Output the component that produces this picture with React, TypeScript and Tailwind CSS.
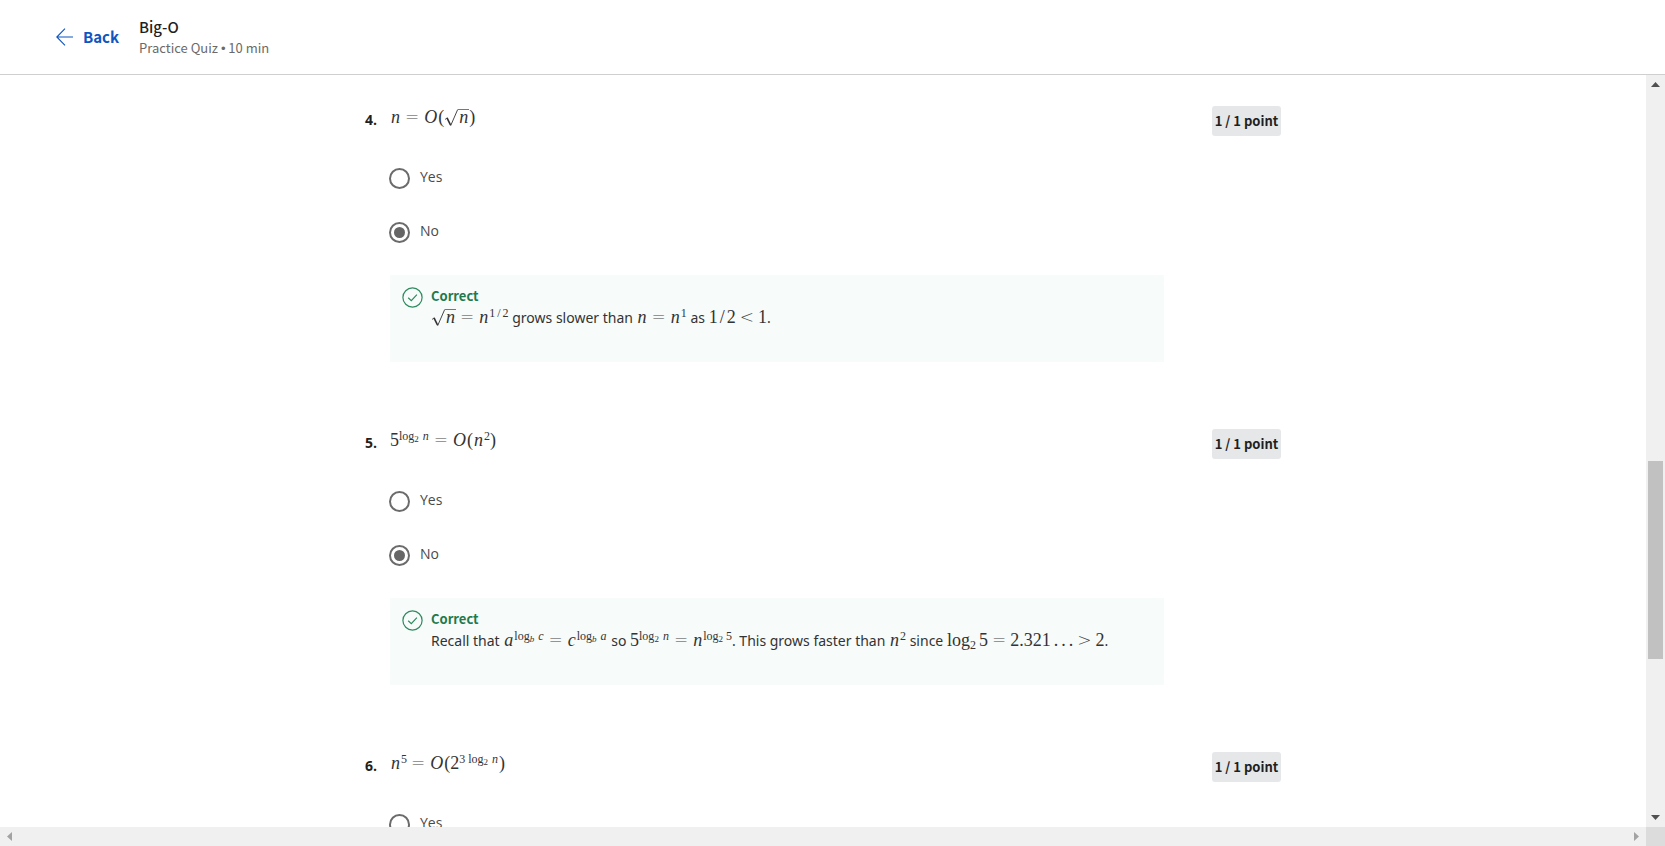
import { useState, type ReactNode } from "react";

const SOURCE = "font-['Noto_Sans_CJK_SC',sans-serif]";

/* ---------- math typesetting ---------- */

function M({ children }: { children: ReactNode }) {
  return (
    <span className="whitespace-nowrap font-['Liberation_Serif',serif] text-[18px]">
      {children}
    </span>
  );
}

function V({ children }: { children: ReactNode }) {
  return <i className="px-px">{children}</i>;
}

function Rel({ children }: { children: ReactNode }) {
  return (
    <span className="px-1 font-['DejaVu_Sans',sans-serif] text-[17px] leading-none font-extralight opacity-90">
      {children}
    </span>
  );
}

function Sup({ children }: { children: ReactNode }) {
  return <sup className="text-[12px]">{children}</sup>;
}

function Slash() {
  return <span className="px-0.5">/</span>;
}

function Log({ base }: { base: ReactNode }) {
  return (
    <span className="pr-[3px]">
      log<sub className="text-[9px]">{base}</sub>
    </span>
  );
}

function Sqrt({ children }: { children: ReactNode }) {
  return (
    <>
      <svg
        className="inline-block h-[18px] w-[14px] align-[-4px]"
        viewBox="0 0 14 18"
        fill="none"
        stroke="currentColor"
        aria-hidden="true"
      >
        <path d="M1 10.5 L3.2 8.8" strokeWidth="0.8" />
        <path d="M3 8.8 L6.5 16" strokeWidth="1.7" />
        <path d="M6.6 16.8 L13.7 0.5" strokeWidth="0.9" />
      </svg>
      <span className="inline-block border-t border-[#777777] leading-[14px]">{children}</span>
    </>
  );
}

/* ---------- quiz data ---------- */

type Question = { id: number; prompt: ReactNode; feedback: ReactNode };

const questions: Question[] = [
  {
    id: 4,
    prompt: (
      <M>
        <V>n</V>
        <Rel>=</Rel>
        <V>O</V>(<Sqrt><V>n</V></Sqrt>)
      </M>
    ),
    feedback: (
      <>
        <M>
          <Sqrt><V>n</V></Sqrt>
          <Rel>=</Rel>
          <V>n</V>
          <Sup>1<Slash />2</Sup>
        </M>{" "}
        grows slower than{" "}
        <M>
          <V>n</V>
          <Rel>=</Rel>
          <V>n</V>
          <Sup>1</Sup>
        </M>{" "}
        as{" "}
        <M>
          1<Slash />2<Rel>&lt;</Rel>1
        </M>
        .
      </>
    ),
  },
  {
    id: 5,
    prompt: (
      <M>
        5<Sup><Log base="2" /><V>n</V></Sup>
        <Rel>=</Rel>
        <V>O</V>(<V>n</V>
        <Sup>2</Sup>)
      </M>
    ),
    feedback: (
      <>
        Recall that{" "}
        <M>
          <V>a</V>
          <Sup><Log base={<i>b</i>} /><V>c</V></Sup>
          <Rel>=</Rel>
          <V>c</V>
          <Sup><Log base={<i>b</i>} /><V>a</V></Sup>
        </M>{" "}
        so{" "}
        <M>
          5<Sup><Log base="2" /><V>n</V></Sup>
          <Rel>=</Rel>
          <V>n</V>
          <Sup><Log base="2" />5</Sup>
        </M>
        . This grows faster than{" "}
        <M>
          <V>n</V>
          <Sup>2</Sup>
        </M>{" "}
        since{" "}
        <M>
          log<sub className="text-[12px]">2</sub>
          <span className="pl-[3px]">5</span>
          <Rel>=</Rel>
          2.321<span className="pl-[3px]">.</span>
          <span className="px-[3px]">.</span>.<Rel>&gt;</Rel>2
        </M>
        .
      </>
    ),
  },
  {
    id: 6,
    prompt: (
      <M>
        <V>n</V>
        <Sup>5</Sup>
        <Rel>=</Rel>
        <V>O</V>(2
        <Sup>
          <span className="pr-[3px]">3</span>
          <Log base="2" />
          <V>n</V>
        </Sup>
        )
      </M>
    ),
    feedback: null,
  },
];

/* ---------- page parts ---------- */

function Header() {
  return (
    <header
      className={`flex h-[75px] shrink-0 items-center border-b border-[#cfcfcf] bg-white pl-14 ${SOURCE}`}
    >
      <a href="#back" className="flex items-center gap-2.5 text-[15px] leading-6 font-bold text-[#0f56c0]">
        <svg
          className="h-[18px] w-[17px]"
          viewBox="0 0 17 18"
          fill="none"
          stroke="currentColor"
          strokeWidth="1.1"
          aria-hidden="true"
        >
          <path d="M9 0.7 L0.8 9 L9 17.3 M0.8 9 H17" />
        </svg>
        Back
      </a>
      <div className="pl-5">
        <h1 className="text-[15px] leading-[22px] font-medium text-[#1f1f1f]">Big-O</h1>
        <p className="text-[13px] leading-5 text-[#6a6a6a]">
          Practice Quiz <span className="font-['Liberation_Sans',sans-serif]">•</span> 10 min
        </p>
      </div>
    </header>
  );
}

function Choice({
  name,
  label,
  checked,
  onSelect,
}: {
  name: string;
  label: string;
  checked: boolean;
  onSelect: () => void;
}) {
  return (
    <label className="flex h-6 items-center gap-2.5 text-[#4a4a4a]">
      <input
        type="radio"
        name={name}
        checked={checked}
        onChange={onSelect}
        className="size-[21px] shrink-0 appearance-none rounded-full border-2 border-[#6b6b6b] bg-white bg-clip-content p-[3px] checked:bg-[#666666]"
      />
      <span className="pb-[3px]">{label}</span>
    </label>
  );
}

function QuestionItem({ question }: { question: Question }) {
  const [answer, setAnswer] = useState(question.feedback ? "No" : "");
  const name = `question-${question.id}`;
  return (
    <section className="flex items-start pb-[61px]">
      <div className="w-[25px] shrink-0 pt-1 leading-8 font-bold text-[#1f1f1f]">
        {question.id}.
      </div>
      <div className="min-w-0 flex-1">
        <div className="h-8 leading-[34px] text-[#333333]">{question.prompt}</div>
        <div className="-ml-px flex flex-col gap-[30px] pt-[34px]">
          {["Yes", "No"].map((label) => (
            <Choice
              key={label}
              name={name}
              label={label}
              checked={answer === label}
              onSelect={() => setAnswer(label)}
            />
          ))}
        </div>
        {question.feedback && (
          <div className="mt-[31px] flex items-start gap-2 bg-[#f7fbfa] px-3 pt-2.5 pb-[33px]">
            <svg
              className="mt-0.5 size-[21px] shrink-0 text-[#2f8a5f]"
              viewBox="0 0 21 21"
              fill="none"
              stroke="currentColor"
              aria-hidden="true"
            >
              <circle cx="10.5" cy="10.5" r="9.6" strokeWidth="1.2" />
              <path d="M6.2 10.8 L9.3 13.7 L14.9 7.6" strokeWidth="1.2" />
            </svg>
            <div>
              <p className={`h-[22px] text-[13px] leading-[22px] font-bold text-[#1f7a4d] ${SOURCE}`}>
                Correct
              </p>
              <p className="h-[22px] font-['Noto_Sans',sans-serif] leading-5 text-[#333333]">
                {question.feedback}
              </p>
            </div>
          </div>
        )}
      </div>
      <div
        className={`mt-1.5 ml-12 flex h-[30px] w-[69px] shrink-0 items-center justify-center rounded-[3px] bg-[#e5e7e8] text-[13px] leading-[30px] font-bold whitespace-nowrap text-[#1f1f1f] ${SOURCE}`}
      >
        1 / 1 point
      </div>
    </section>
  );
}

function Arrow({ d, className }: { d: string; className: string }) {
  return (
    <svg className={`size-[9px] ${className}`} viewBox="0 0 9 9" fill="currentColor" aria-hidden="true">
      <path d={d} />
    </svg>
  );
}

const barButton = "flex size-[19px] shrink-0 items-center justify-center";

export default function App() {
  return (
    <div className="flex h-screen flex-col overflow-hidden bg-white font-['Open_Sans',sans-serif] text-[14px]">
      <Header />
      <div className="flex min-h-0 flex-1">
        <main className="min-w-0 flex-1 overflow-hidden pt-[25px]">
          <div className="mx-auto max-w-[916px]">
            {questions.map((q) => (
              <QuestionItem key={q.id} question={q} />
            ))}
          </div>
        </main>
        <div className="flex w-[19px] shrink-0 flex-col bg-[#f0f0f0]">
          <button type="button" aria-label="Scroll up" className={barButton}>
            <Arrow d="M0 7 L4.5 2 L9 7 Z" className="text-[#505050]" />
          </button>
          <div className="flex min-h-0 flex-1 flex-col px-0.5">
            <div className="grow-[367]" />
            <div className="grow-[198] bg-[#c1c1c1]" />
            <div className="grow-[149]" />
          </div>
          <button type="button" aria-label="Scroll down" className={barButton}>
            <Arrow d="M0 2 L4.5 7 L9 2 Z" className="text-[#505050]" />
          </button>
        </div>
      </div>
      <div className="flex h-[19px] shrink-0 bg-[#f0f0f0]">
        <button type="button" aria-label="Scroll left" className={barButton}>
          <Arrow d="M7 0 L2 4.5 L7 9 Z" className="text-[#a3a3a3]" />
        </button>
        <div className="flex-1" />
        <button type="button" aria-label="Scroll right" className={barButton}>
          <Arrow d="M2 0 L7 4.5 L2 9 Z" className="text-[#a3a3a3]" />
        </button>
        <div className="w-[19px] bg-[#dcdcdc]" />
      </div>
    </div>
  );
}
